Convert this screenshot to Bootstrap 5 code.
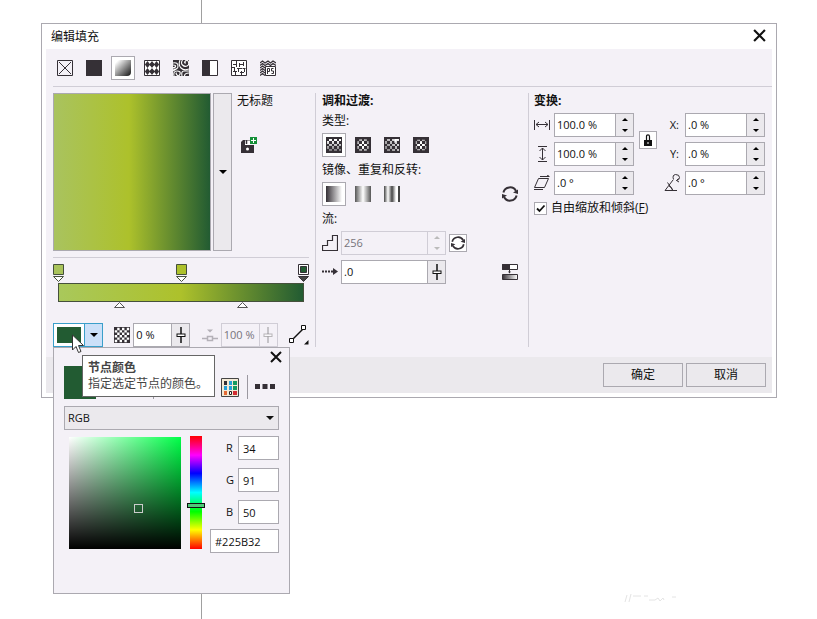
<!DOCTYPE html>
<html lang="zh-CN">
<head>
<meta charset="utf-8">
<meta name="viewport" content="width=device-width, initial-scale=1">
<title>编辑填充</title>
<link href="https://cdn.jsdelivr.net/npm/bootstrap@5.3.0/dist/css/bootstrap.min.css" rel="stylesheet">
<style>
:root{--ink:#353036;--line:#aba9b0;--soft:#d0cdd6;--panel:#f4f1f7;--bar:#ebe9ed}
body{font:12px/16px "Open Sans","Noto Sans CJK SC",sans-serif;color:#111;background:#fff;min-height:100vh;position:relative;overflow:hidden}
svg{display:block;flex:none}
button{padding:0;border:0;background:none;color:inherit}
input,select,button{font-family:inherit;line-height:16px}
.guide{position:absolute;top:0;bottom:0;left:201px;width:1px;background:#a0a0a0}
.fill-dialog{position:relative;margin:23px 40px 0 41px;background:#fff;border:1px solid var(--line)}
.title-strip{height:25px;padding:0 10px 2px 9px}
.title-strip span{padding-top:2px}
.surface{margin:0 4px;background:var(--panel);padding:7px 0 10px 7px}
.tools{gap:5px}
.tool{width:24px;height:24px;display:flex;align-items:center;justify-content:center;border:1px solid transparent}
.tool.on{background:#fff;border-color:var(--line)}
.rule{height:1px;background:var(--soft)}
.rule-top{margin:6px 0}
.fill-col{width:256px;margin-right:6px;flex:none}
.blend-col{width:213px;border-left:1px solid var(--soft);padding:0 10px 0 6px;flex:none}
.shape-col{border-left:1px solid var(--soft);padding-left:5px}
.preview{width:158px;height:158px;border:1px solid var(--line);background:linear-gradient(90deg,#a9c35f,#adc12b 48%,#225b32)}
.drop{width:19px;height:158px;margin-left:2px;border:1px solid var(--line);background:var(--bar)}
.file-name{margin-left:5px;gap:28px}
.rule-mid{margin:6px 0}
.ramp{height:19px;margin:1px 5px 0;border:1px solid #45503c;background:linear-gradient(90deg,#a9c85b,#adc12b 50%,#225b32)}
.mids{margin:0 5px 15px}
.node-row{height:24px}
.spin{display:flex;height:24px;width:80px;border:1px solid var(--line);background:#fff;flex:none}
.spin input{flex:1;min-width:0;width:0;border:0;background:none;padding:0 2px;font-size:11px;color:#111;outline:0}
.spin .side{width:18px;border-left:1px solid var(--line);background:var(--bar);display:flex;flex-direction:column;flex:none}
.spin .side button{flex:1;display:flex;align-items:center;justify-content:center}
.spin.off{background:var(--panel);border-color:var(--soft)}
.spin.off .side{background:var(--panel);border-color:var(--soft)}
.spin.off input{color:#77747b}
.w-node{width:57px}
.w-flow{width:105px}
.node-color{width:50px;height:24px;border:1px solid #3a9fca;background:#fff}
.node-color .chip{width:24px;height:16px;margin:3px;background:#225b32}
.node-color .arrow{width:18px;height:22px;border-left:1px solid #3a9fca;background:#cbe0f8}
.step{margin-bottom:4px}
.set{margin-bottom:5px}
.boxed{width:18px;height:18px;border:1px solid var(--line);background:#fff;display:flex;align-items:center;justify-content:center;flex:none}
.lock{margin-top:18px}
.gap5{gap:5px}
.gap4{gap:4px}
.gap3{gap:3px}
.axis{width:19px;padding-right:2px;text-align:right;font-size:11px}
.free{appearance:none;width:13px;height:13px;margin:0;border:1px solid var(--line);background:#fff;border-radius:0}
.free:checked{background:#fff url("data:image/svg+xml,%3Csvg xmlns='http://www.w3.org/2000/svg' viewBox='0 0 11 11'%3E%3Cpath d='M2 5.500l2.500 2.500L9.500 2.500' fill='none' stroke='%23111' stroke-width='1.800'/%3E%3C/svg%3E")}
.foot{margin:0 4px 4px;background:var(--bar);padding:6px;gap:3px}
.act{width:80px;height:24px;border:1px solid var(--line)}
.picker{position:absolute;left:0;top:24px;width:237px;z-index:10;background:var(--panel);border:1px solid var(--line);padding:0 10px 40px}
.picker-top{height:18px;margin-right:-3px}
.swatch{width:32px;height:33px;background:#225b32}
.vr-a,.vr-b{width:1px;background:#9b98a0}
.vr-a{height:33px;margin-left:57px;margin-right:67px}
.vr-b{height:24px;margin:0 7px 0 8px;align-self:flex-end}
.model{appearance:none;width:100%;height:24px;margin:7px 0 6px;padding:0 3px;font-size:11px;border:1px solid var(--line);border-radius:0;color:#111;background:var(--bar) url("data:image/svg+xml,%3Csvg xmlns='http://www.w3.org/2000/svg' width='8' height='4'%3E%3Cpath d='M0 0h8L4 4z' fill='%23111'/%3E%3C/svg%3E") no-repeat right 4px center}
.shade{position:relative;width:112px;height:112px;margin:1px 9px 0 5px;background:linear-gradient(0deg,#000,transparent),linear-gradient(90deg,#fff,#00ff48)}
.shade i{position:absolute;left:58%;top:60%;width:9px;height:9px;border:1px solid #ccc}
.hue{position:relative;width:12px;height:113px;background:linear-gradient(#f00,#f0f 17%,#00f 33%,#0ff 50%,#0f0 67%,#ff0 83%,#f00)}
.hue i{position:absolute;left:-3px;top:59%;width:18px;height:5px;border:1px solid #111;background:#4fc878}
.vals{width:69px;margin-left:8px}
.vals input{width:41px;height:24px;border:1px solid var(--line);background:#fff;padding:0 4px;font-size:11px;color:#111}
.vals label{font-size:11px}
.val-row{margin-bottom:8px}
.val-last{margin-bottom:5px}
.vals .hex{width:69px}
.tip{position:absolute;left:29px;top:32px;z-index:12;width:133px;height:42px;padding:4px 5px;background:#fff;border:1px solid #666;color:#444;white-space:nowrap}
.pointer{position:absolute;left:18px;top:11px;z-index:13}
.smudge{position:absolute;right:135px;bottom:14px}
</style>
<script src="https://cdn.jsdelivr.net/npm/bootstrap@5.3.0/dist/js/bootstrap.bundle.min.js"></script>
</head>
<body>
<svg width="0" height="0" class="position-absolute" aria-hidden="true">
<defs>
<g id="cells" fill="#fff"><path d="M3 2h3v2H3zM8 2h3v2H8zM13 2h2v2h-2zM1 4h2v3H1zM6 4h2v3H6zM11 4h2v3h-2zM3 7h3v2H3zM8 7h3v2H8zM13 7h2v2h-2zM1 9h2v3H1zM6 9h2v3H6zM11 9h2v3h-2zM3 12h3v2H3zM8 12h3v2H8zM13 12h2v2h-2z"/></g>
<g id="cells-mid" fill="#fff"><path d="M4 2h3v2H4zM9 2h3v2H9zM2 4h2v3H2zM7 4h2v3H7zM12 4h2v3h-2zM4 7h3v2H4zM9 7h3v2H9zM2 9h2v3H2zM7 9h2v3H7zM12 9h2v3h-2zM4 12h3v2H4zM9 12h3v2H9z"/></g>
<linearGradient id="fd" x1="0" y1="0" x2="0" y2="1"><stop offset=".2" stop-color="#353036" stop-opacity="0"/><stop offset="1" stop-color="#353036" stop-opacity=".8"/></linearGradient>
<radialGradient id="fr"><stop offset=".35" stop-color="#353036" stop-opacity="0"/><stop offset="1" stop-color="#353036" stop-opacity=".85"/></radialGradient>
<linearGradient id="fc" x1="1" y1="0" x2="0" y2="1"><stop offset="0" stop-color="#353036" stop-opacity="0"/><stop offset="1" stop-color="#353036" stop-opacity=".7"/></linearGradient>
<linearGradient id="g1"><stop stop-color="#353036"/><stop offset="1" stop-color="#fff"/></linearGradient>
<linearGradient id="g2"><stop stop-color="#555"/><stop offset=".5" stop-color="#fff"/><stop offset="1" stop-color="#555"/></linearGradient>
<linearGradient id="g3"><stop stop-color="#444"/><stop offset=".25" stop-color="#fff"/><stop offset=".5" stop-color="#444"/><stop offset=".75" stop-color="#fff"/><stop offset=".88" stop-color="#fff"/><stop offset=".9" stop-color="#444"/><stop offset="1" stop-color="#444"/></linearGradient>
<linearGradient id="gd" x1="0" y1="0" x2="1" y2="1"><stop offset=".1" stop-color="#fff"/><stop offset="1" stop-color="#111"/></linearGradient>
<symbol id="down" viewBox="0 0 8 4"><path d="M0 0h8L4 4z"/></symbol>
<symbol id="s-up" viewBox="0 0 6 3"><path d="M0 3L3 0l3 3z"/></symbol>
<symbol id="s-dn" viewBox="0 0 6 3"><path d="M0 0h6L3 3z"/></symbol>
<symbol id="slide" viewBox="0 0 12 16"><path d="M6 0v16" stroke="currentColor" stroke-width="1.500"/><rect x="2" y="7" width="8" height="2.500" fill="#fff" stroke="currentColor"/></symbol>
<symbol id="cycle" viewBox="0 0 16 16"><g fill="none" stroke="#353036" stroke-width="2"><path d="M1.400 6.500A6.800 6.800 0 0 1 14 5M14.600 9.500A6.800 6.800 0 0 1 2 11"/></g><path d="M16 3.500V8l-5-1.500zM0 12.500V8l5 1.500z" fill="#353036"/></symbol>
<symbol id="close" viewBox="0 0 12 12"><path d="M1 1l10 10M11 1L1 11" stroke="#111" stroke-width="2"/></symbol>
</defs>
</svg>
<div class="guide"></div>
<main class="fill-dialog">
  <header class="title-strip d-flex justify-content-between align-items-center">
    <span>编辑填充</span>
    <button aria-label="关闭"><svg width="13" height="13"><use href="#close"/></svg></button>
  </header>
  <section class="surface">
    <div class="tools d-flex">
      <button class="tool" aria-label="无填充"><svg width="16" height="16" fill="none" stroke="#353036"><path d="M.5.5h15v15H.5zM2 2l12 12M14 2L2 14"/></svg></button>
      <button class="tool" aria-label="均匀填充"><svg width="16" height="16"><rect width="16" height="16" fill="#353036"/></svg></button>
      <button class="tool on" aria-label="渐变填充"><svg width="16" height="16"><path d="M0 16V4Q0 0 4 0h12v12q0 4-4 4z" fill="url(#gd)"/></svg></button>
      <button class="tool" aria-label="向量图样填充"><svg width="16" height="16"><path d="M.5.500h15v15H.5z" fill="#fff" stroke="#353036"/><g fill="#353036"><path d="M3.500 1L6 4.500 3.500 8 1 4.500zM8 1l2.500 3.500L8 8 5.500 4.500zM12.500 1L15 4.500 12.500 8 10 4.500zM3.500 8L6 11.500 3.500 15 1 11.500zM8 8l2.500 3.500L8 15l-2.500-3.500zM12.500 8l2.500 3.500-2.500 3.500-2.500-3.500z"/><circle cx="3.500" cy="4.500" r="2"/><circle cx="8" cy="4.500" r="2"/><circle cx="12.500" cy="4.500" r="2"/><circle cx="3.500" cy="11.500" r="2"/><circle cx="8" cy="11.500" r="2"/><circle cx="12.500" cy="11.500" r="2"/></g></svg></button>
      <button class="tool" aria-label="位图图样填充"><svg width="16" height="16"><rect width="16" height="16" fill="#353036"/><g fill="none" stroke="#fff" stroke-width="1.100"><path d="M7 0q-2 5 1 8t8 1M9.500 0q-2 3 0 5t4.500 1 1.500-4-3-1 .5 2M0 3q5-1 5 3T0 9M0 5q3 0 2.500 1.500T0 7.500M1 16q-1-5 3-5t3 3-3 1 0-2M9 16q-1-5 2-5t5 0M11.500 16q0-3 4.500-3M0 11l4-2.500"/></g></svg></button>
      <button class="tool" aria-label="双色图样填充"><svg width="16" height="16"><path d="M.5.5h15v15H.5z" fill="#fff" stroke="#353036"/><path d="M0 0h8v16H0z" fill="#353036"/></svg></button>
      <button class="tool" aria-label="底纹填充"><svg width="16" height="16" fill="none" stroke="#353036"><path d="M.5.5h15v15H.5z" fill="#fff"/><path d="M2 4.500h4M5.500 1v6M8.500 3v4M8 4.500h5M12.500 2v4M1 7.500h3M3.500 7v4M6 8.500h5M7.500 8v4M11.500 8.500h3M13.500 8v4M2 11.500h4M4.500 11v4M9 12.500h4M10.500 11v4"/></svg></button>
      <button class="tool" aria-label="PostScript 填充"><svg width="16" height="16" fill="none" stroke="#353036"><path stroke-width="1.200" d="M0 3l2.500-2L5 3l3-2 2.500 2L13 1l3 2M0 5.500l2.500-2 2.500 2 3-2 2.500 2 2.500-2 3 2M0 8l2.500-2L5 8M0 10.500l2.500-2 2.500 2M0 13l2.500-2L5 13M0 15.500l2.500-2 2.500 2"/><path d="M5.500 6.500h10v9h-10z" fill="#fff"/><path d="M7.500 14V8.500h2v3h-2M13.500 8.500h-2v2.500h2V13.500h-2"/></svg></button>
    </div>
    <div class="rule rule-top"></div>
    <div class="d-flex">
      <div class="fill-col">
        <div class="d-flex">
          <div class="preview"></div>
          <button class="drop d-flex align-items-center justify-content-center" aria-label="填充挑选器"><svg width="8" height="4"><use href="#down"/></svg></button>
          <div class="file-name d-flex flex-column"><span>无标题</span>
            <button class="align-self-start ms-1" aria-label="另存为新"><svg width="17" height="16"><path d="M0 5l2-2h7v5h4v8H0z" fill="#353036"/><path d="M4 3.500h5V8H4z" fill="#fff"/><path d="M5.500 3v4" stroke="#353036" stroke-width="1.500"/><circle cx="6.500" cy="12" r="1.500" fill="#fff"/><path d="M9 0h7v7H9z" fill="#149038"/><path d="M12.500 1v5M10 3.500h5" stroke="#fff"/></svg></button>
          </div>
        </div>
        <div class="rule rule-mid"></div>
        <div class="d-flex justify-content-between">
          <svg width="11" height="18" stroke="#45503c"><path d="M.5.500h10v10H.5z" fill="#a9c35b"/><path d="M.5 12.500h10l-5 5z" fill="#fff"/></svg>
          <svg width="11" height="18" stroke="#45503c"><path d="M.5.500h10v10H.5z" fill="#adc12b"/><path d="M.5 12.500h10l-5 5z" fill="#fff"/></svg>
          <svg width="11" height="18" stroke="#353036"><path d="M.5.500h10v10H.5z" fill="#fff"/><path d="M2.500 2.500h6v6h-6z" fill="#225b32"/><path d="M.5 12.500h10l-5 5z" fill="#444"/></svg>
        </div>
        <div class="ramp"></div>
        <div class="mids d-flex justify-content-around">
          <svg width="11" height="6" fill="#fff" stroke="#555"><path d="M.5 5.500h10l-5-5z"/></svg>
          <svg width="11" height="6" fill="#fff" stroke="#555"><path d="M.5 5.500h10l-5-5z"/></svg>
        </div>
        <div class="node-row d-flex align-items-center justify-content-between">
          <div class="position-relative">
            <button class="node-color d-flex" aria-label="节点颜色"><span class="chip"></span><span class="arrow d-flex align-items-center justify-content-center"><svg width="8" height="4"><use href="#down"/></svg></span></button>
            <div class="picker">
              <div class="picker-top d-flex justify-content-end align-items-center"><button aria-label="关闭颜色面板"><svg width="12" height="12"><use href="#close"/></svg></button></div>
              <div class="d-flex">
                <span class="swatch"></span><span class="vr-a"></span>
                <button class="align-self-end" aria-label="调色板"><svg width="18" height="21" viewBox="0 0 18 21"><path d="M.5.500h17v18H.5z" fill="#f3ead6" stroke="#444"/><path fill="#353036" d="M3 3h3v4H3z"/><path fill="#249fd8" d="M8 3h3v4H8zM3 8h3v4H3zM8 8h3v4H8z"/><path fill="#149a60" d="M12 3h4v4h-4zM12 8h4v4h-4z"/><path fill="#e36a35" d="M3 13h3v4H3z"/><path fill="#fff" stroke="#222" d="M8.500 13.500h2v3h-2z"/><path fill="#d12c32" d="M12 13h4v4h-4z"/></svg></button>
                <span class="vr-b"></span>
                <button class="align-self-end mb-2" aria-label="更多"><svg width="20" height="8"><path d="M0 1h5v5H0zM7.500 1h5v5h-5zM15 1h5v5h-5z" fill="#353036"/></svg></button>
              </div>
              <select class="model" aria-label="颜色模型"><option>RGB</option></select>
              <div class="d-flex">
                <div class="shade"><i></i></div>
                <div class="hue"><i></i></div>
                <div class="vals">
                  <div class="val-row d-flex justify-content-between align-items-center"><label for="r" class="ms-3">R</label><input id="r" value="34"></div>
                  <div class="val-row d-flex justify-content-between align-items-center"><label for="g" class="ms-3">G</label><input id="g" value="91"></div>
                  <div class="val-last d-flex justify-content-between align-items-center"><label for="b" class="ms-3">B</label><input id="b" value="50"></div>
                  <input class="hex d-block" aria-label="十六进制" value="#225B32">
                </div>
              </div>
            </div>
            <div class="tip" role="tooltip"><b class="d-block">节点颜色</b>指定选定节点的颜色。</div>
            <svg class="pointer" width="14" height="21"><path d="M1.500 1v15l3.500-3.500 2.500 6 2.500-1-2.500-6h5z" fill="#fff" stroke="#333"/></svg>
          </div>
          <div class="d-flex align-items-center gap3">
            <svg class="ms-px" width="16" height="16" viewBox="0 0 20 20"><rect width="20" height="20" fill="#353036"/><path transform="translate(1 1)" fill="#fff" d="M3 0h3v3H3zM9 0h3v3H9zM15 0h3v3h-3zM0 3h3v3H0zM6 3h3v3H6zM12 3h3v3h-3zM3 6h3v3H3zM9 6h3v3H9zM15 6h3v3h-3zM0 9h3v3H0zM6 9h3v3H6zM12 9h3v3h-3zM3 12h3v3H3zM9 12h3v3H9zM15 12h3v3h-3zM0 15h3v3H0zM6 15h3v3H6zM12 15h3v3h-3z"/></svg>
            <div class="spin w-node"><input aria-label="节点透明度" value="0 %"><span class="side"><button aria-label="透明度滑块"><svg width="12" height="16"><use href="#slide"/></svg></button></span></div>
          </div>
          <div class="d-flex align-items-center gap3">
            <svg width="16" height="16" fill="none" stroke="#b4b1b8"><path d="M0 11.500h5M11 11.500h5M5.500 9.500h5v4h-5z" stroke-width="1.500"/><path d="M5 2.500h6L8 5.500z" fill="#b4b1b8" stroke="none"/></svg>
            <div class="spin w-node off"><input aria-label="节点位置" value="100 %" disabled><span class="side text-black-50"><button disabled aria-label="位置滑块"><svg width="12" height="16" opacity=".5"><use href="#slide"/></svg></button></span></div>
          </div>
          <button aria-label="调和方向"><svg width="20" height="20" fill="#fff" stroke="#111"><path d="M3 15L15 3" stroke-width="1.500"/><path d="M.5 13.500h4v4h-4zM12.500.500h4v4h-4z"/><path d="M19.500 15v4.500H15z" fill="#111" stroke="none"/></svg></button>
        </div>
      </div>

      <div class="blend-col">
        <div class="step fw-bold">调和过渡:</div>
        <div class="step">类型:</div>
        <div class="tools set d-flex">
          <button class="tool on" aria-label="线性"><svg width="16" height="16"><rect width="16" height="16" fill="#353036"/><use href="#cells"/><rect width="16" height="16" fill="url(#fd)"/></svg></button>
          <button class="tool" aria-label="椭圆形"><svg width="16" height="16"><rect width="16" height="16" fill="#353036"/><use href="#cells-mid"/><rect width="16" height="16" fill="url(#fr)"/></svg></button>
          <button class="tool" aria-label="圆锥形"><svg width="16" height="16"><rect width="16" height="16" fill="#353036"/><use href="#cells"/><rect width="16" height="16" fill="url(#fc)"/><path d="M10 6l1-4h4z" fill="#fff"/></svg></button>
          <button class="tool" aria-label="矩形"><svg width="16" height="16"><rect width="16" height="16" fill="#353036"/><use href="#cells-mid"/><rect width="16" height="16" fill="url(#fr)"/><path d="M2.500 2.500h11v11h-11z" fill="none" stroke="#353036" stroke-opacity=".6"/></svg></button>
        </div>
        <div class="step">镜像、重复和反转:</div>
        <div class="d-flex justify-content-between align-items-center set">
          <div class="tools d-flex">
            <button class="tool on" aria-label="默认"><svg width="16" height="16"><rect width="16" height="16" fill="url(#g1)"/></svg></button>
            <button class="tool" aria-label="重复和镜像"><svg width="16" height="16"><rect width="16" height="16" fill="url(#g2)"/></svg></button>
            <button class="tool" aria-label="重复"><svg width="16" height="16"><rect width="16" height="16" fill="url(#g3)"/></svg></button>
          </div>
          <button aria-label="反转填充"><svg width="16" height="16"><use href="#cycle"/></svg></button>
        </div>
        <div class="step">流:</div>
        <div class="d-flex align-items-center gap3 set">
          <svg width="16" height="16" fill="none" stroke="#353036" stroke-width="1.200"><path d="M.500 15.500v-5h5v-5h5v-5h5v15z"/></svg>
          <div class="spin w-flow off"><input aria-label="步长" value="256" disabled><span class="side"><button disabled aria-label="增加步长"><svg width="6" height="3" fill="#bbb"><use href="#s-up"/></svg></button><button disabled aria-label="减少步长"><svg width="6" height="3" fill="#bbb"><use href="#s-dn"/></svg></button></span></div>
          <button class="boxed" aria-label="默认步长"><svg width="14" height="14"><use href="#cycle"/></svg></button>
        </div>
        <div class="d-flex align-items-center gap3">
          <svg width="16" height="16"><path d="M0 7.500h12" stroke="#353036" stroke-width="1.800" stroke-dasharray="2 1"/><path d="M11 4l5 3.500-5 3.500z" fill="#353036"/></svg>
          <div class="spin w-flow"><input aria-label="加速" value=".0"><span class="side"><button aria-label="加速滑块"><svg width="12" height="16"><use href="#slide"/></svg></button></span></div>
          <button class="ms-auto" aria-label="平滑"><svg width="16" height="16" stroke="#353036"><path d="M.5.500h15v5H.5z" fill="#fff"/><path d="M.5.500h7v5h-7z" fill="#353036"/><path d="M.5 10.500h15v5H.5z" fill="url(#g1)"/><path d="M7.500 5v4"/><path d="M6 7.500h3L7.500 9.500z" fill="#353036" stroke="none"/></svg></button>
        </div>
      </div>

      <div class="shape-col flex-fill">
        <div class="step fw-bold">变换:</div>
        <div class="d-flex align-items-start gap5 set">
          <div class="d-flex flex-column gap5">
            <div class="d-flex align-items-center gap4"><svg width="16" height="16" fill="none" stroke="#353036"><path d="M.5 3v10M15.500 3v10M2 7.500h12M5 5L2 7.500 5 10M11 5l3 2.500-3 2.500"/></svg>
              <div class="spin"><input aria-label="填充宽度" value="100.0 %"><span class="side"><button aria-label="增加"><svg width="6" height="3"><use href="#s-up"/></svg></button><button aria-label="减少"><svg width="6" height="3"><use href="#s-dn"/></svg></button></span></div></div>
            <div class="d-flex align-items-center gap4"><svg width="16" height="16" fill="none" stroke="#353036"><path d="M4 .500h9M4 15.500h9M8.500 2v12M5.500 5l3-3 3 3M5.500 11l3 3 3-3"/></svg>
              <div class="spin"><input aria-label="填充高度" value="100.0 %"><span class="side"><button aria-label="增加"><svg width="6" height="3"><use href="#s-up"/></svg></button><button aria-label="减少"><svg width="6" height="3"><use href="#s-dn"/></svg></button></span></div></div>
            <div class="d-flex align-items-center gap4"><svg width="16" height="16" fill="none" stroke="#353036"><path d="M4.500 3.500h10l-4 9H.5zM6 1.500h9M0 14.500h9M13 0l2.500 1.500"/></svg>
              <div class="spin"><input aria-label="倾斜" value=".0 °"><span class="side"><button aria-label="增加"><svg width="6" height="3"><use href="#s-up"/></svg></button><button aria-label="减少"><svg width="6" height="3"><use href="#s-dn"/></svg></button></span></div></div>
          </div>
          <button class="boxed lock" aria-label="锁定纵横比"><svg width="10" height="12"><path d="M3.500 6V2.500Q3.500.800 5 .800t1.500 1.700V6" fill="none" stroke="#111" stroke-width="1.200"/><path d="M1 6h8v6H1z" fill="#111"/><path d="M5 8v2" stroke="#fff"/></svg></button>
          <div class="d-flex flex-column gap5">
            <div class="d-flex align-items-center gap4"><label class="axis" for="x">X:</label>
              <div class="spin"><input id="x" value=".0 %"><span class="side"><button aria-label="增加"><svg width="6" height="3"><use href="#s-up"/></svg></button><button aria-label="减少"><svg width="6" height="3"><use href="#s-dn"/></svg></button></span></div></div>
            <div class="d-flex align-items-center gap4"><label class="axis" for="y">Y:</label>
              <div class="spin"><input id="y" value=".0 %"><span class="side"><button aria-label="增加"><svg width="6" height="3"><use href="#s-up"/></svg></button><button aria-label="减少"><svg width="6" height="3"><use href="#s-dn"/></svg></button></span></div></div>
            <div class="d-flex align-items-center gap4"><svg width="19" height="20" fill="none" stroke="#353036"><path d="M11 7L3 17.500h12M5.500 9.500L11 17.500M7 13q3 1 3.500 4"/><path d="M11.500 6.500Q10 2 13.500 1.500q4 0 4 3 0 2.500-3 3M16.500 5.500l-2 2 2.500 1.500"/></svg>
              <div class="spin"><input aria-label="旋转" value=".0 °"><span class="side"><button aria-label="增加"><svg width="6" height="3"><use href="#s-up"/></svg></button><button aria-label="减少"><svg width="6" height="3"><use href="#s-dn"/></svg></button></span></div></div>
          </div>
        </div>
        <div class="d-flex align-items-center gap4"><input class="free" type="checkbox" id="free" checked><label for="free">自由缩放和倾斜(<u>F</u>)</label></div>
      </div>
    </div>
  </section>
  <footer class="foot d-flex justify-content-end">
    <button class="act">确定</button>
    <button class="act">取消</button>
  </footer>
</main>
<svg class="smudge" width="58" height="14" fill="none" stroke="#e4e4e4" aria-hidden="true"><path d="M3 4L1 11M7 3L5 11M9 5h8M20 5h4M25 9h6l3-2 2 3 3-3 1 2M48 6h4"/></svg>
</body>
</html>
